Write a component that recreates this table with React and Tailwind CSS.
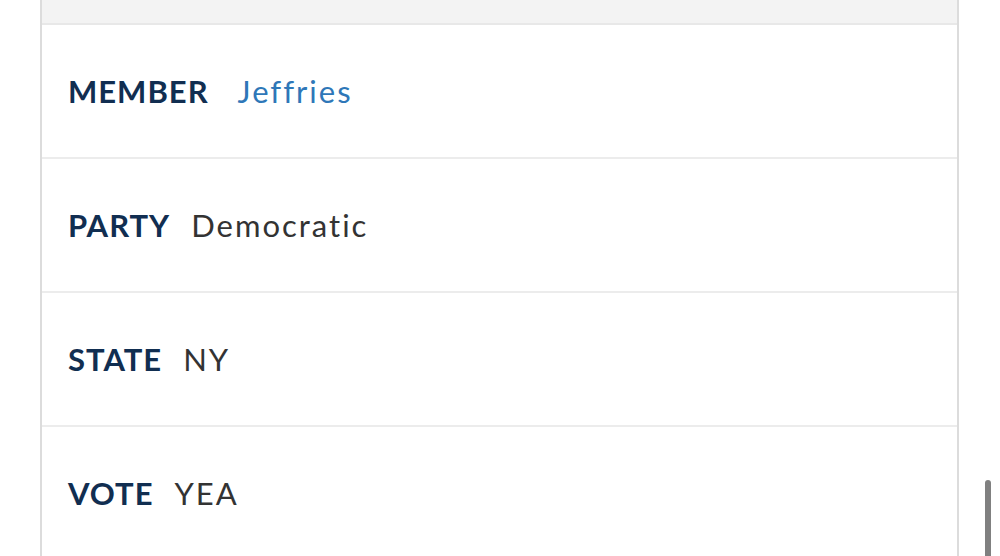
export default function App() {
  const rows = [
    { label: "MEMBER", value: "Jeffries", link: true },
    { label: "PARTY", value: "Democratic" },
    { label: "STATE", value: "NY" },
    { label: "VOTE", value: "YEA" },
  ];
  return (
    <div className="relative w-[1000px] h-[556px] overflow-hidden bg-white" style={{ fontFamily: "Lato, 'Open Sans', sans-serif" }}>
      <div className="ml-[40px] w-[919px] border-x-2 border-[#dcdcdc] flex flex-col">
        <div className="h-[25px] bg-[#f3f3f3] border-b-2 border-[#e8e8e8]"></div>
        {rows.map((r, i) => (
          <div key={i} className="h-[134px] shrink-0 flex items-center pl-[26px] border-b-2 border-[#ececec]">
            <span className="text-[31px] font-bold tracking-[1px] text-[#112e51]">{r.label}</span>
            <span className={`text-[31px] tracking-[2px] ${r.link ? "ml-[29px] text-[#2e77b8]" : "ml-[21px] text-[#333333]"}`}>{r.value}</span>
          </div>
        ))}
      </div>
      <div className="absolute left-[985px] top-[480px] w-[6px] h-[90px] rounded-full bg-[#808080]"></div>
    </div>
  );
}
